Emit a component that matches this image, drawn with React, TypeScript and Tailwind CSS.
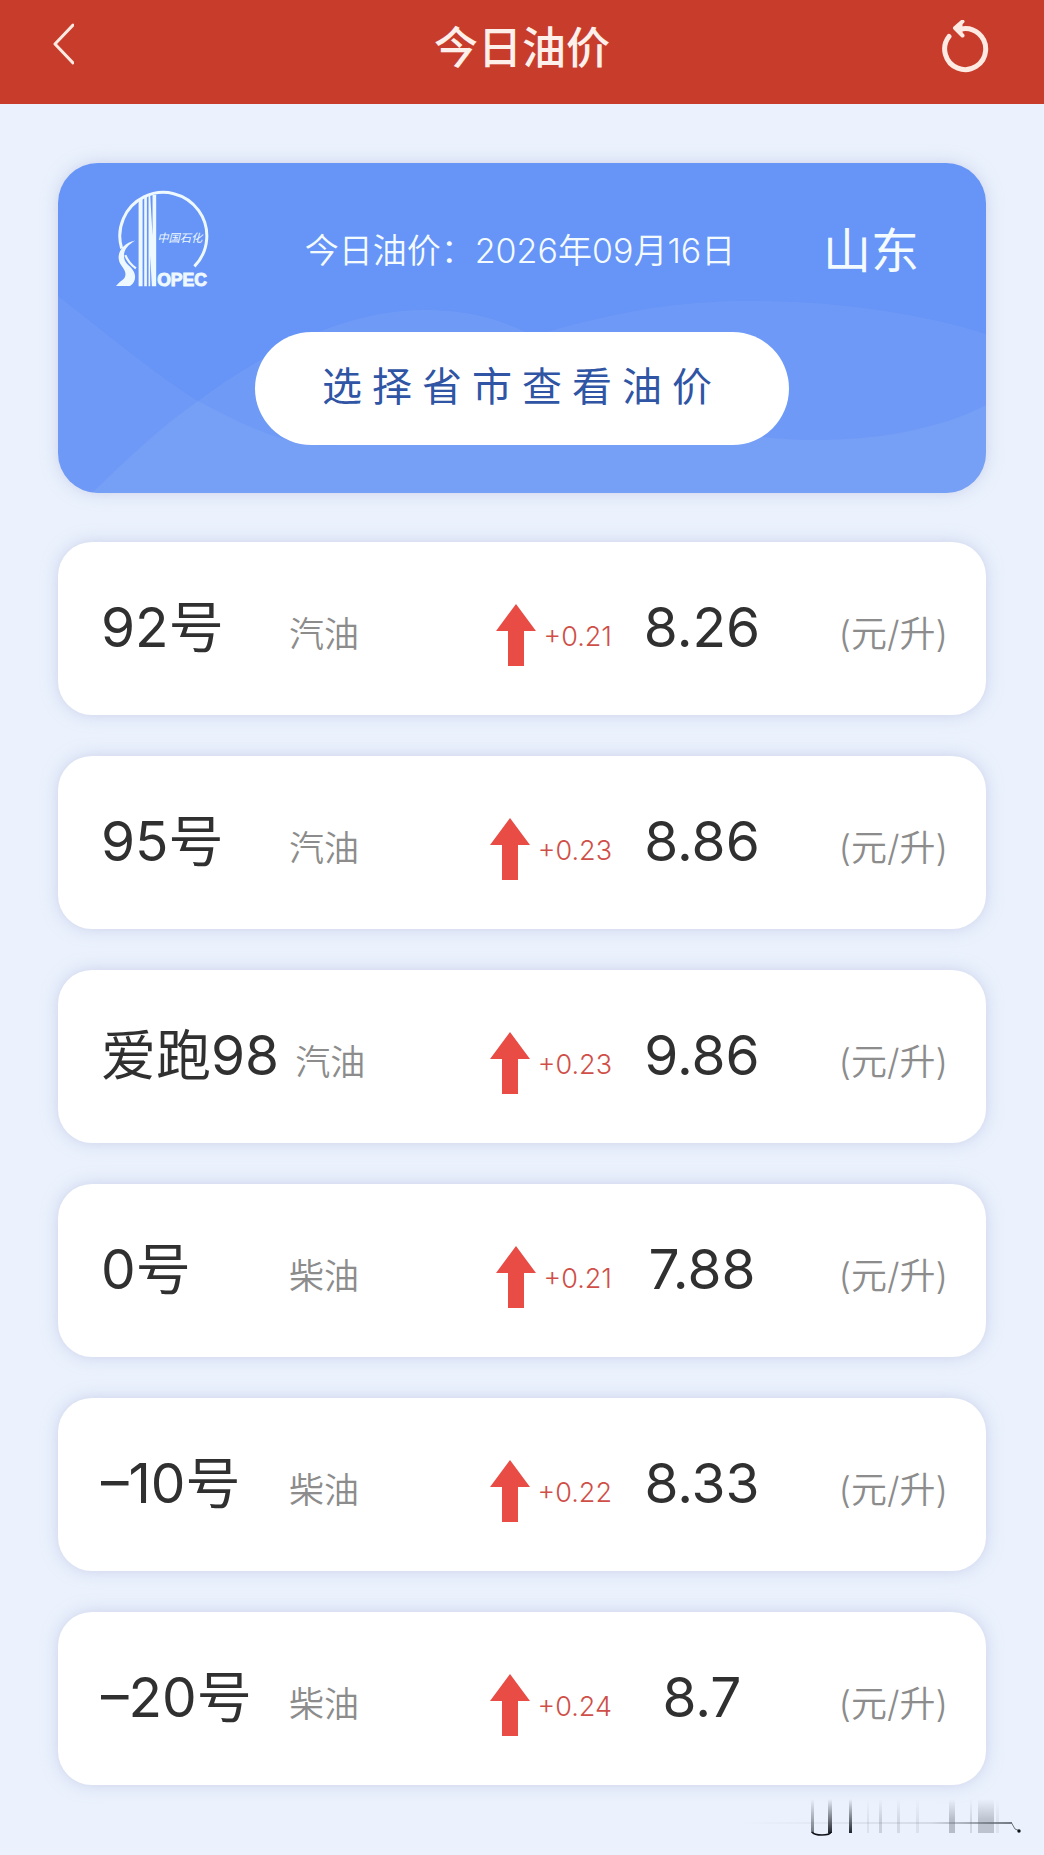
import React from "react";

type Fuel = {
  grade: string;
  type: string;
  change: string;
  price: string;
};

const fuels: Fuel[] = [
  { grade: "92号", type: "汽油", change: "+0.21", price: "8.26" },
  { grade: "95号", type: "汽油", change: "+0.23", price: "8.86" },
  { grade: "爱跑98", type: "汽油", change: "+0.23", price: "9.86" },
  { grade: "0号", type: "柴油", change: "+0.21", price: "7.88" },
  { grade: "–10号", type: "柴油", change: "+0.22", price: "8.33" },
  { grade: "–20号", type: "柴油", change: "+0.24", price: "8.7" },
];

function BackIcon() {
  return (
    <svg viewBox="0 0 24 44" className="h-11 w-6" fill="none" aria-hidden="true">
      <path d="M23 3 L5 22 L23 41" stroke="#fdeae2" strokeWidth="3" strokeLinecap="round" strokeLinejoin="round" />
    </svg>
  );
}

function RefreshIcon() {
  return (
    <svg viewBox="0 0 52 56" className="h-14 w-[52px]" fill="none" aria-hidden="true">
      <path d="M19 9 A20.500 20.500 0 1 1 7 16.500" stroke="#fdeae2" strokeWidth="5" strokeLinecap="round" />
      <path d="M20.500 1.500 L13 8 L20.500 15.500" fill="#fdeae2" stroke="#fdeae2" strokeWidth="4" strokeLinecap="round" strokeLinejoin="round" />
    </svg>
  );
}

function SinopecLogo() {
  return (
    <svg viewBox="50 40 280 296" className="h-[99px] w-[93px] shrink-0 overflow-visible" role="img" aria-label="中国石化 SINOPEC">
      <path d="M67 218 A131 131 0 1 1 286 272" fill="none" stroke="#eef8ff" strokeWidth="9" />
      <path d="M118 70 L130 64 V332 H118 Z M135 62 L143 60 V332 H135 Z M148 58 L153 57 L160 180 V57 L171 56 V332 H158 L153 240 V332 H148 Z" fill="#eef8ff" />
      <path d="M108 194 C74 200 56 226 58 248 C60 272 82 278 78 300 C76 312 64 314 50 331 H92 C110 320 112 298 100 282 C88 266 74 262 74 240 C74 220 88 206 108 194 Z" fill="#eef8ff" />
      <path d="M78 238 C86 258 96 268 110 278" fill="none" stroke="#eef8ff" strokeWidth="7" />
      <text x="174" y="200" fill="#eef8ff" fontSize="34" fontStyle="italic" fontFamily="'Noto Sans CJK SC', sans-serif">中国石化</text>
      <text x="174" y="331" fill="#eef8ff" stroke="#eef8ff" strokeWidth="3" fontSize="53" fontWeight="700" fontFamily="'Liberation Sans', sans-serif">OPEC</text>
    </svg>
  );
}

function CardWaves() {
  return (
    <svg viewBox="0 0 928 330" preserveAspectRatio="none" className="absolute inset-0 h-full w-full" aria-hidden="true">
      <path d="M0 133 C60 180 100 213 140 238 C200 270 260 300 330 270 C400 230 440 180 510 163 C580 145 630 138 690 138 C780 138 860 150 928 171 V330 H0 Z" fill="#a8c4f4" fillOpacity="0.13" />
      <path d="M34 330 C70 295 105 262 140 238 C210 186 290 147 365 147 C420 147 450 160 480 175 C560 225 620 277 760 277 C830 277 890 262 928 242 V330 Z" fill="#a8c4f4" fillOpacity="0.15" />
    </svg>
  );
}

function UpArrow() {
  return (
    <svg viewBox="0 0 40 62" className="h-[62px] w-10" aria-hidden="true">
      <path d="M20 0 L40 27 H28 V62 H12 V27 H0 Z" fill="#e84c45" />
    </svg>
  );
}

function FuelRow({ fuel }: { fuel: Fuel }) {
  return (
    <li className="flex h-[173px] items-center rounded-[34px] bg-white pt-1 pr-[38px] pl-[43px] shadow-[0_0_16px_rgba(170,175,215,0.5)]">
      <div className="flex flex-1 items-baseline">
        <span className="mr-4 min-w-[172px] text-[55px] leading-[80px] text-[#303030]">{fuel.grade}</span>
        <span className="text-[35px] leading-[80px] font-[350] text-[#8c8c8c]">{fuel.type}</span>
      </div>
      <div className="flex items-center gap-2 pt-2">
        <UpArrow />
        <span className="pt-1 text-[27px] leading-8 font-[350] text-[#cf4f48]">{fuel.change}</span>
      </div>
      <div className="flex items-baseline">
        <span className="w-[180px] text-center text-[55px] leading-[80px] text-[#303030]">{fuel.price}</span>
        <span className="w-[156px] text-right text-[36px] leading-[80px] font-[350] text-[#8c8c8c]">(元/升)</span>
      </div>
    </li>
  );
}

function Watermark() {
  return (
    <svg viewBox="0 0 304 40" className="h-10 w-[304px]" aria-hidden="true">
      <defs>
        <linearGradient id="fade" x1="0" y1="0" x2="0" y2="1">
          <stop offset="0" stopColor="#20242c" stopOpacity="0" />
          <stop offset="1" stopColor="#20242c" stopOpacity="1" />
        </linearGradient>
        <linearGradient id="soft" x1="0" y1="0" x2="0" y2="1">
          <stop offset="0" stopColor="#5a5f6a" stopOpacity="0" />
          <stop offset="0.600" stopColor="#5a5f6a" stopOpacity="0.900" />
          <stop offset="1" stopColor="#5a5f6a" stopOpacity="0.900" />
        </linearGradient>
        <linearGradient id="line" x1="0" y1="0" x2="1" y2="0">
          <stop offset="0" stopColor="#555a64" stopOpacity="0" />
          <stop offset="0.700" stopColor="#555a64" stopOpacity="0.150" />
          <stop offset="1" stopColor="#555a64" stopOpacity="0.800" />
        </linearGradient>
      </defs>
      <g fill="url(#fade)">
        <rect x="71" y="2" width="3" height="34" opacity="0.600" />
        <rect x="88" y="2" width="4" height="34" />
        <rect x="109" y="2" width="3" height="34" />
      </g>
      <g fill="url(#soft)">
        <rect x="127" y="2" width="2" height="34" opacity="0.120" />
        <rect x="139" y="2" width="3" height="34" opacity="0.250" />
        <rect x="157" y="2" width="3" height="34" opacity="0.180" />
        <rect x="176" y="2" width="3" height="34" opacity="0.120" />
        <rect x="209" y="2" width="6" height="34" opacity="0.400" />
        <rect x="230" y="2" width="2" height="34" opacity="0.200" />
        <rect x="238" y="2" width="16" height="34" opacity="0.350" />
        <rect x="256" y="2" width="3" height="34" opacity="0.100" />
      </g>
      <path d="M72 35 Q74 38 82 38 Q90 38 91 35" fill="none" stroke="#101318" strokeWidth="1.500" />
      <rect x="0" y="25" width="272" height="2" fill="url(#line)" />
      <path d="M271 25 L275 32 L280 34" fill="none" stroke="#6b7078" strokeWidth="1" />
      <circle cx="279" cy="34" r="1.700" fill="#101318" />
    </svg>
  );
}

export default function App() {
  return (
    <div className="min-h-screen bg-[#ebf2fd] font-[Inter,'Noto_Sans_CJK_SC',sans-serif]">
      <header className="grid h-[104px] grid-cols-[1fr_auto_1fr] items-center bg-[#c83c2c] px-[50px] pb-2">
        <button type="button" aria-label="返回" className="-mt-2 justify-self-start">
          <BackIcon />
        </button>
        <h1 className="text-[44px] leading-[64px] font-medium text-[#fdf0ea]">今日油价</h1>
        <button type="button" aria-label="刷新" className="justify-self-end">
          <RefreshIcon />
        </button>
      </header>

      <main className="px-[58px] pt-[59px]">
        <section className="relative h-[330px] overflow-hidden rounded-[40px] bg-[#6694f7] shadow-[0_0_16px_rgba(170,175,215,0.5)]">
          <CardWaves />
          <div className="relative flex h-full flex-col items-center pt-[26px]">
            <div className="flex w-full items-center justify-between pr-[67px] pl-[58px]">
              <SinopecLogo />
              <p className="pt-6 pl-2 text-[34px] leading-[50px] font-[350] text-[#f4fbff]">今日油价：2026年09月16日</p>
              <p className="pt-6 text-[48px] leading-[56px] text-[#f4fbff]">山东</p>
            </div>
            <button type="button" className="mt-11 h-[113px] w-[534px] rounded-full bg-white pb-1 text-[40px] tracking-[10px] text-[#2f55a4]">
              选择省市查看油价
            </button>
          </div>
        </section>

        <ul className="mt-[49px] flex flex-col gap-[41px]">
          {fuels.map((fuel) => (
            <FuelRow key={fuel.grade} fuel={fuel} />
          ))}
        </ul>
      </main>

      <footer className="flex justify-end pt-3">
        <Watermark />
      </footer>
    </div>
  );
}
